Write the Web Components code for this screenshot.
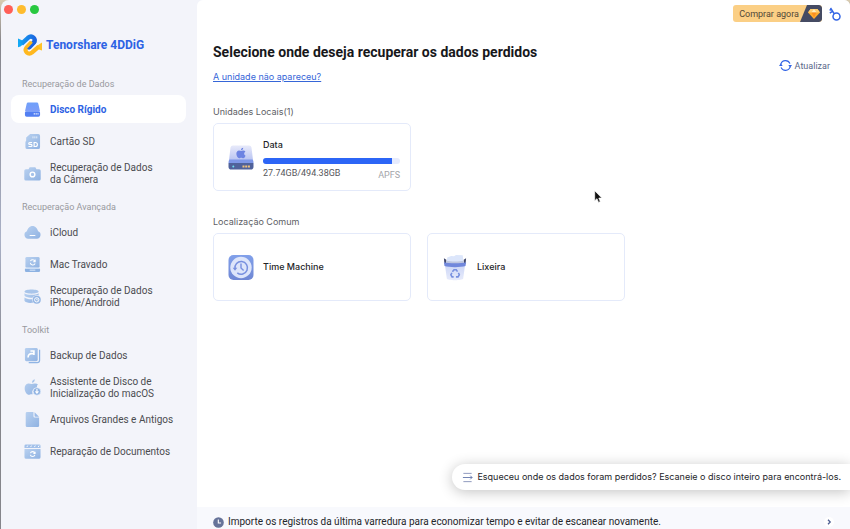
<!DOCTYPE html>
<html lang="pt-BR">
<head>
<meta charset="utf-8">
<title>Tenorshare 4DDiG</title>
<style>
    html {
        background: linear-gradient(#d8cbb0, #85858b 8%, #a9b0c6 45%, #85858b 70%);
    }
    body {
        margin: 0;
        font-family: Roboto, "Liberation Sans", sans-serif;
        font-size: 10px;
        line-height: 12px;
        color: #4b4c50;
    }
</style>
</head>
<body>
<dig-window>
    <dig-sidebar slot="sidebar">
        <dig-nav-group label="Recuperação de Dados">
            <dig-nav-item icon="disk" active>Disco Rígido</dig-nav-item>
            <dig-nav-item icon="sd">Cartão SD</dig-nav-item>
            <dig-nav-item icon="camera">Recuperação de Dados<br>da Câmera</dig-nav-item>
        </dig-nav-group>
        <dig-nav-group label="Recuperação Avançada">
            <dig-nav-item icon="cloud">iCloud</dig-nav-item>
            <dig-nav-item icon="mac">Mac Travado</dig-nav-item>
            <dig-nav-item icon="phone">Recuperação de Dados<br>iPhone/Android</dig-nav-item>
        </dig-nav-group>
        <dig-nav-group label="Toolkit">
            <dig-nav-item icon="backup">Backup de Dados</dig-nav-item>
            <dig-nav-item icon="boot">Assistente de Disco de<br>Inicialização do macOS</dig-nav-item>
            <dig-nav-item icon="file">Arquivos Grandes e Antigos</dig-nav-item>
            <dig-nav-item icon="repair">Reparação de Documentos</dig-nav-item>
        </dig-nav-group>
    </dig-sidebar>

    <dig-topbar></dig-topbar>
    <dig-heading>Selecione onde deseja recuperar os dados perdidos</dig-heading>
    <dig-section label="Unidades Locais(1)">
        <dig-drive icon="drive" used="27.74GB/494.38GB" format="APFS" value="94">Data</dig-drive>
    </dig-section>
    <dig-section label="Localização Comum">
        <dig-drive icon="timemachine">Time Machine</dig-drive>
        <dig-drive icon="trash">Lixeira</dig-drive>
    </dig-section>
    <dig-tip>Esqueceu onde os dados foram perdidos? Escaneie o disco inteiro para encontrá-los.</dig-tip>
    <dig-import slot="footer">Importe os registros da última varredura para economizar tempo e evitar de escanear novamente.</dig-import>
</dig-window>
<dig-cursor></dig-cursor>

<script>
    const GRADIENT = `<defs><linearGradient id="g" x1="0" y1="0" x2="1" y2="1">
        <stop offset="0" stop-color="#b9d1f0"/><stop offset="1" stop-color="#8fb2e2"/>
    </linearGradient></defs>`;

    const APPLE = 'M10.8 4.2c.9-1 1-2 .9-2.7-1.2.1-2.6 1-2.7 3 .7.1 1.300 0 1.800-.3zM12 5c-1.200 0-1.800.6-2.700.6S7.600 5 6.500 5C4.500 5 3 6.700 3 9.200 3 11.900 4.900 15 6.600 15c.9 0 1.500-.6 2.700-.6s1.600.6 2.600.6c1.300 0 2.400-1.800 2.900-3.200-2.500-1.200-2.300-4.300-.1-5.500C14.100 5.500 13.100 5 12 5z';

    const ICONS = {
        disk: ['0 0 18 18', `<defs><linearGradient id="g" x2="0" y2="1"><stop stop-color="#6fa0fa"/><stop offset="1" stop-color="#7d9df8"/></linearGradient></defs>
            <path d="M4.500 1.500h9c.8 0 1.400.5 1.600 1.200l1.800 7.800H1.100l1.800-7.800c.2-.7.800-1.200 1.600-1.200z" fill="url(#g)"/>
            <rect x="1" y="10.600" width="16" height="6" rx="1.800" fill="#527ff2"/>
            <path d="M1.500 11h15" stroke="#a9c3ff" stroke-width=".6"/>
            <path d="M10.300 13.700h1.200m.8 0h1.200m.8 0h1.100" stroke="#fff" stroke-width="1.300"/>`],
        sd: ['0 0 18 18', `${GRADIENT}<path d="M6.500 1H15a2 2 0 0 1 2 2v12a2 2 0 0 1-2 2H3.500a2 2 0 0 1-2-2V9.500L2.300 8V4.800z" fill="url(#g)"/>
            <path d="M9.500 3.500v2.200m2-2.200v2.200m2-2.200v2.200" stroke="#fff" stroke-width=".9" opacity=".8"/>
            <path d="M8.600 10.100H6.100c-1.500 0-1.500 2 0 2h1.300c1.500 0 1.500 2.200 0 2.200H4.700M10.700 10v4.300h1.400c2.800 0 2.800-4.300 0-4.300z" fill="none" stroke="#fff" stroke-width="1.200"/>`],
        camera: ['0 0 18 18', `${GRADIENT}<path d="M6 2.500h6l1.200 2H16a1.700 1.700 0 0 1 1.700 1.700v8.600A1.700 1.700 0 0 1 16 16.500H2a1.700 1.700 0 0 1-1.700-1.700V6.200A1.700 1.700 0 0 1 2 4.500h2.800z" fill="url(#g)"/>
            <circle cx="9" cy="10" r="2.500" fill="none" stroke="#fff" stroke-width="1.500"/>`],
        cloud: ['0 0 18 18', `${GRADIENT}<path d="M4.300 15.500a4 4 0 0 1-1.300-7.700c.7-3.100 2.900-5.800 6-5.800s5.300 2.700 6 5.800a4 4 0 0 1-1.300 7.700z" fill="url(#g)"/>
            <path d="M6 12.200h6" stroke="#fff" stroke-width="1.100"/>`],
        mac: ['0 0 18 18', `${GRADIENT}<rect x="1.500" y="1" width="15" height="11.500" rx="1.500" fill="url(#g)"/>
            <rect x="1" y="13" width="16" height="4" rx="1.300" fill="#8db2e2"/>
            <path d="M1.500 12.900h15M6 15h6" stroke="#eaf2ff" stroke-width=".9"/>
            <path d="M6.800 5.200A2.700 2.700 0 0 1 11.700 6M11.800 8A2.700 2.700 0 0 1 6.700 7.300M11.800 3.800V6H9.700" fill="none" stroke="#fff" stroke-width="1.100"/>`],
        phone: ['0 0 18 18', `${GRADIENT}<path d="M.5 3.800C.5.800 15.500.800 15.500 3.800S.5 6.800.5 3.800z" fill="#a9c5ea"/>
            <path d="M.5 5.500c2.500 2.300 12.500 2.300 15 0V8C12.800 7 9.800 8.500 9 10.200 5 10.500 1.500 9.600.5 8zM.5 10c2 1.600 5 2 8.100 1.800 0 1.300.4 2.600 1.200 3.600C6.300 16.300 1.400 15.500.5 13.500z" fill="url(#g)"/>
            <circle cx="13.500" cy="12.500" r="4.300" fill="#96b7e4"/><circle cx="13.500" cy="12.500" r="2.300" fill="none" stroke="#fff"/>
            <path d="M13.500 11.200v1.500h1.200" stroke="#fff" fill="none" stroke-width=".8"/>`],
        backup: ['0 0 18 18', `${GRADIENT}<path d="M5 16.500h9a2.500 2.500 0 0 0 2.500-2.500V3" fill="none" stroke="#8fb4e4" stroke-width="1.300"/>
            <rect x="1" y="1" width="13.500" height="14" rx="1.500" fill="url(#g)"/>
            <path d="M4.300 11.200c0-3.100 1.700-4.500 5.400-4.500M6.800 4.200h3.700v4.300" fill="none" stroke="#fff" stroke-width="1.700"/>`],
        boot: ['0 0 18 18', `${GRADIENT}<path d="M8.400 4c0-2 1.100-3.400 3-3.700.2 2-1.100 3.500-3 3.700zM12 4.800c-1.500-.5-2.800.4-4 .4s-2-.6-3.500-.4C2 5.200.5 7.200.7 10.200c.2 3.200 2.300 6.500 4.500 6.500 1 0 1.500-.5 2.600-.5h1.400C7.800 12.500 10 9.200 13.800 9c-.3-1.500 0-2.700 1-3.300-.7-.6-1.700-.9-2.800-.9z" fill="url(#g)"/>
            <circle cx="13.700" cy="13.200" r="4" fill="#8fb2e2" stroke="#eef3fc" stroke-width=".7"/><path d="M13.700 10.700v4m-1.600-1.500 1.600 1.700 1.600-1.700" fill="none" stroke="#fff" stroke-width="1.200"/>`],
        file: ['0 0 18 18', `${GRADIENT}<path d="M3.300 1H10v4.500a1.500 1.500 0 0 0 1.500 1.500H16v8.500a1.500 1.500 0 0 1-1.500 1.500H3.300a1.500 1.500 0 0 1-1.500-1.500v-13A1.500 1.500 0 0 1 3.300 1z" fill="url(#g)"/>
            <path d="M11.200 1.200 15.900 6h-3.600a1 1 0 0 1-1.100-1z" fill="#9dbce8"/>`],
        repair: ['0 0 18 18', `${GRADIENT}<path d="M2 1.500h14A1.500 1.500 0 0 1 17.500 3v2.200H.5V3A1.500 1.500 0 0 1 2 1.500z" fill="#a3c1ea"/>
            <path d="M3 4.300 4 2.700m3 1.600 1-1.600m3 1.600 1-1.600m3 1.600 1-1.600" stroke="#fff"/>
            <path d="M.5 6.300h17V15a1.800 1.800 0 0 1-1.800 1.800H2.300A1.800 1.800 0 0 1 .5 15z" fill="url(#g)"/>
            <path d="M6.800 10.700A2.500 2.500 0 0 1 11.500 11M11.500 12.500a2.500 2.500 0 0 1-4.800 0M11.700 9.300V11H9.900" fill="none" stroke="#fff" stroke-width="1.200"/>`],
        logo: ['0 0 24 24', `<defs><linearGradient id="b" gradientUnits="userSpaceOnUse" x2="18"><stop stop-color="#12a8f5"/><stop offset="1" stop-color="#1b62de"/></linearGradient></defs>
            <path d="M0 5.500 4 7.300l2 3.200-3.500 3L0 14.200z" fill="#12a8f5"/>
            <path d="M24 9.500v8l-2.500-.8-3.700-3.200z" fill="#ffc229"/>
            <path d="M3.500 10.800 10 4.800c4-3.400 8.800 1.200 5.800 4.700L11 14.500" fill="none" stroke="url(#b)" stroke-width="4.400"/>
            <path d="M20.800 13.700 14.200 19.400c-4 3.200-8.800-1.400-5.600-5.100L13.500 9.200" fill="none" stroke="#ffb81f" stroke-width="4.200"/>
            <path d="M16.300 9 11 14.500" fill="none" stroke="#1b62de" stroke-width="4.200" stroke-linecap="round"/>
            <path d="m8.400 14.500 5.500-5.700" stroke="#ffb81f" stroke-width="2.600"/>`],
        drive: ['0 0 26 26', `<defs><linearGradient id="g" x2="0" y2="1"><stop stop-color="#e8eafa"/><stop offset="1" stop-color="#b9c4f2"/></linearGradient></defs>
            <path d="M5 1h16a2.500 2.500 0 0 1 2.500 2L25 15.500H1L2.500 3A2.500 2.500 0 0 1 5 1z" fill="url(#g)"/>
            <path d="M1.500 15h23c.8 1 1 2 1 3.500H.5c0-1.500.2-2.500 1-3.500z" fill="#7f98e8"/>
            <path d="M.5 18.500h25v3.700a2.800 2.800 0 0 1-2.800 2.800H3.300a2.800 2.800 0 0 1-2.800-2.800z" fill="#50629b"/>
            <path d="M14.500 22h8" stroke="#efc37d" stroke-width="2.200" stroke-dasharray="2 .7"/><circle cx="5.300" cy="22" r="1" fill="#6de0f0"/>
            <path transform="translate(6 2) scale(.78)" d="${APPLE}" fill="#6c83e2"/>`],
        timemachine: ['0 0 26 26', `<defs><linearGradient id="g" x2="0" y2="1"><stop stop-color="#81a0ea"/><stop offset="1" stop-color="#6f87d4"/></linearGradient></defs>
            <rect x=".5" y=".5" width="25" height="25" rx="5" fill="url(#g)"/>
            <circle cx="13" cy="13" r="10.700" fill="#dde5fa"/>
            <path d="M7 14.500a6.300 6.300 0 1 1 2.300 3.800" fill="none" stroke="#7890df" stroke-width="1.500"/>
            <path d="M4.700 13.200h4.600L7 16.300z" fill="#7890df"/>
            <path d="M13 9v4.500l2.600 2.600" fill="none" stroke="#7890df" stroke-width="1.400"/>`],
        trash: ['0 0 26 28', `<defs><linearGradient id="g" x2="0" y2="1"><stop stop-color="#ccd6f6"/><stop offset="1" stop-color="#e7ebfb"/></linearGradient></defs>
            <path d="M1.500 4.500 4 6v4H2zM24.500 4.500 22 6v4h2z" fill="#42496c"/>
            <path d="M5 3.500 9 2l3 .4L14 1l7 .2 1 8.800H4z" fill="#dce6fb"/>
            <path d="M4 7c4 1 14 1 18 0v4H4z" fill="#bec6df"/>
            <path d="M2.500 11h21l-2 14.500c-.3 2.300-16.700 2.300-17 0z" fill="url(#g)"/>
            <path d="M1.500 8.500c5 1.500 18 1.500 23 0l-.6 4c-5 1.600-17 1.600-21.800 0z" fill="#7188dc"/>
            <path d="m10.300 18.500 1.700-2.200h2.300l1.300 2M16.500 19.500l1 2-1.300 2.200H14M11.600 23.700H9.900l-1.200-2.200 1.100-2" fill="none" stroke="#7890df" stroke-width="1.600"/>`],
        refresh: ['0 0 14 14', `<path d="M2 5.500a5.200 5.200 0 0 1 9.800-.5M12 8.500a5.200 5.200 0 0 1-9.800.5" fill="none" stroke="#3264e5" stroke-width="1.200"/>
            <path d="M10 6.500h4L12 9.300zM0 7.500h4L2 4.700z" fill="#3264e5"/>`],
        key: ['0 0 14 14', `<circle cx="8.500" cy="9.500" r="3.500" fill="none" stroke="#3264e5" stroke-width="1.500"/>
            <path d="M6.300 6.800 2.500 1M1.800 6.200l2.900-2M1.600 3.300l2-1.400" stroke="#3264e5" stroke-width="1.500"/>`],
        gem: ['0 0 22 17', `<path d="M7 0h12a3 3 0 0 1 3 3v11a3 3 0 0 1-3 3H0z" fill="#454b63"/>
            <path d="M10.500 4h7l2.500 3.500-6 6.500-6-6.500z" fill="#ffad2c"/><path d="M10.500 4 8 7.500h12L17.500 4z" fill="#ffcf70"/>
            <path d="m14 4-2.500 3.500h5z" fill="#fff0bf"/><path d="m11.500 7.500 2.500 5 2.500-5z" fill="#fb9021"/>`],
        scan: ['0 0 12 12', `<path d="M1.500 1.500h9M1.500 10.500h9" stroke="#8792b9"/><path d="M1 6h10M9 4l2 2-2 2" fill="none" stroke="#6678ad"/>`],
        clock: ['0 0 12 12', `<circle cx="6" cy="6" r="5.800" fill="#667399"/><path d="M5.800 2.800v3.700h3" fill="none" stroke="#fff" stroke-width="1.200"/>`],
        chevron: ['0 0 10 10', `<circle cx="5" cy="5" r="5" fill="#fff"/><path d="m4 2.800 2.200 2.200L4 7.200" fill="none" stroke="#4d5e91" stroke-width="1.300"/>`]
    };

    class DigElement extends HTMLElement {
        constructor() {
            super();
            this.attachShadow({ mode: 'open' });
        }

        connectedCallback() {
            this.shadowRoot.innerHTML = this.render();
        }
    }

    class DigIcon extends DigElement {
        render() {
            const [viewBox, shapes] = ICONS[this.getAttribute('name')];
            return `
                <style>
                    :host { display: block; flex: none; }
                    svg { display: block; width: 100%; height: 100%; }
                </style>
                <svg viewBox="${viewBox}" aria-hidden="true">${shapes}</svg>`;
        }
    }

    class DigWindow extends DigElement {
        render() {
            return `
                <style>
                    :host {
                        display: grid;
                        grid-template-columns: 196px minmax(0, 1fr);
                        min-height: 100vh;
                        margin-left: 1px;
                        border-radius: 8px 6px 0 0;
                        overflow: hidden;
                        background: #f3f4fa;
                    }
                    .page {
                        position: relative;
                        display: flex;
                        flex-direction: column;
                        background: #fff;
                        border-top-left-radius: 6px;
                    }
                    main { flex: 1; padding: 0 16px; }
                </style>
                <slot name="sidebar"></slot>
                <div class="page">
                    <main><slot></slot></main>
                    <slot name="footer"></slot>
                </div>`;
        }
    }

    class DigSidebar extends DigElement {
        render() {
            return `
                <style>
                    :host { display: block; padding: 5px 11px 16px 10px; }
                    .lights { display: flex; gap: 4px; margin-left: -7px; }
                    .lights button {
                        width: 9px;
                        height: 9px;
                        padding: 0;
                        border: 0;
                        border-radius: 50%;
                    }
                    .close { background: #ff5f57; }
                    .minimize { background: #febc2e; }
                    .zoom { background: #28c840; }
                    .brand {
                        display: flex;
                        align-items: center;
                        gap: 4px;
                        margin: 19px 7px;
                        font-size: 12px;
                        line-height: 24px;
                        font-weight: 700;
                        color: #2d62e4;
                    }
                    .brand dig-icon { width: 24px; height: 24px; }
                    nav { display: flex; flex-direction: column; gap: 12px; }
                </style>
                <div class="lights">
                    <button class="close" aria-label="Fechar"></button>
                    <button class="minimize" aria-label="Minimizar"></button>
                    <button class="zoom" aria-label="Ampliar"></button>
                </div>
                <div class="brand"><dig-icon name="logo"></dig-icon>Tenorshare 4DDiG</div>
                <nav><slot></slot></nav>`;
        }
    }

    class DigNavGroup extends DigElement {
        render() {
            return `
                <style>
                    :host { display: flex; flex-direction: column; gap: 4px; }
                    .label {
                        padding: 1px 11px 0;
                        font-size: 9px;
                        line-height: 14px;
                        color: #98999e;
                    }
                </style>
                <div class="label">${this.getAttribute('label')}</div>
                <slot></slot>`;
        }
    }

    class DigNavItem extends DigElement {
        render() {
            return `
                <style>
                    :host { display: block; }
                    a {
                        display: flex;
                        align-items: center;
                        gap: 9px;
                        min-height: 28px;
                        padding: 0 13px;
                        border-radius: 8px;
                        color: inherit;
                        text-decoration: none;
                        white-space: nowrap;
                    }
                    :host([active]) a {
                        background: #fff;
                        color: #2d62e4;
                        font-weight: 700;
                    }
                    dig-icon { width: 17px; height: 17px; }
                    span { padding-top: 2px; }
                </style>
                <a href="#"><dig-icon name="${this.getAttribute('icon')}"></dig-icon><span><slot></slot></span></a>`;
        }
    }

    class DigTopbar extends DigElement {
        render() {
            return `
                <style>
                    :host {
                        display: flex;
                        justify-content: flex-end;
                        align-items: center;
                        gap: 6px;
                        height: 17px;
                        padding-top: 5px;
                        margin-right: -8px;
                    }
                    button {
                        display: flex;
                        align-items: center;
                        padding: 0;
                        border: 0;
                        background: none;
                        font: inherit;
                        color: #514737;
                    }
                    .buy {
                        gap: 1px;
                        padding-left: 6px;
                        border-radius: 3px;
                        background: #fbcf85;
                        font-size: 9px;
                        overflow: hidden;
                    }
                    .buy dig-icon { width: 22px; height: 17px; }
                    .key dig-icon { width: 14px; height: 14px; }
                </style>
                <button class="buy">Comprar agora<dig-icon name="gem"></dig-icon></button>
                <button class="key" aria-label="Registrar"><dig-icon name="key"></dig-icon></button>`;
        }
    }

    class DigHeading extends DigElement {
        render() {
            return `
                <style>
                    :host {
                        display: flex;
                        justify-content: space-between;
                        align-items: flex-end;
                        padding: 20px 4px 23px 0;
                    }
                    h1 {
                        margin: 0 0 9px;
                        font-size: 14px;
                        line-height: 20px;
                        color: #17181b;
                    }
                    a {
                        font-family: Inter, "Liberation Sans", sans-serif;
                        font-size: 9px;
                        line-height: 12px;
                        color: #3666d8;
                    }
                    .link { display: flex; }
                    button {
                        display: flex;
                        align-items: center;
                        gap: 3px;
                        padding: 0;
                        margin-bottom: 11px;
                        border: 0;
                        background: none;
                        font: inherit;
                        font-size: 9px;
                        color: #596789;
                    }
                    button dig-icon { width: 13px; height: 13px; }
                </style>
                <div>
                    <h1><slot></slot></h1>
                    <div class="link"><a href="#">A unidade não apareceu?</a></div>
                </div>
                <button><dig-icon name="refresh"></dig-icon>Atualizar</button>`;
        }
    }

    class DigSection extends DigElement {
        render() {
            return `
                <style>
                    :host { display: block; margin-bottom: 25px; }
                    h2 {
                        margin: 0 0 5px;
                        font-family: Inter, "Liberation Sans", sans-serif;
                        font-size: 9px;
                        line-height: 12px;
                        font-weight: 400;
                        color: #606166;
                    }
                    .cards {
                        display: grid;
                        grid-template-columns: repeat(auto-fill, 198px);
                        gap: 16px;
                    }
                </style>
                <h2>${this.getAttribute('label')}</h2>
                <div class="cards"><slot></slot></div>`;
        }
    }

    class DigDrive extends DigElement {
        render() {
            const used = this.getAttribute('used');
            const usage = used ? `
                <progress max="100" value="${this.getAttribute('value')}" aria-label="Espaço"></progress>
                <span class="usage"><span>${used}</span><span class="format">${this.getAttribute('format')}</span></span>` : '';
            return `
                <style>
                    :host { display: block; }
                    button {
                        display: flex;
                        align-items: center;
                        gap: 9px;
                        box-sizing: border-box;
                        width: 100%;
                        height: 68px;
                        padding: 0 10px 0 14px;
                        border: 1px solid #e4eafa;
                        border-radius: 5px;
                        background: #fff;
                        font: inherit;
                        font-size: 9px;
                        text-align: left;
                        color: #232427;
                    }
                    dig-icon { width: 26px; height: 27px; }
                    .info { flex: 1; display: flex; flex-direction: column; }
                    :host([used]) .info { padding-top: 5px; }
                    .name { font-family: Inter, "Liberation Sans", sans-serif; font-weight: 500; }
                    progress {
                        display: block;
                        appearance: none;
                        width: 100%;
                        height: 6px;
                        margin: 7px 0 3px;
                        border: 0;
                        border-radius: 3px;
                        overflow: hidden;
                    }
                    progress::-webkit-progress-bar { background: #e6ebfd; }
                    progress::-webkit-progress-value { background: #2c65f6; }
                    .usage { display: flex; justify-content: space-between; color: #55565b; }
                    .format { padding-top: 2px; color: #a3a4a9; }
                </style>
                <button>
                    <dig-icon name="${this.getAttribute('icon')}"></dig-icon>
                    <span class="info"><span class="name"><slot></slot></span>${usage}</span>
                </button>`;
        }
    }

    class DigTip extends DigElement {
        render() {
            return `
                <style>
                    :host { position: absolute; right: 0; bottom: 39px; }
                    button {
                        display: flex;
                        align-items: center;
                        gap: 4px;
                        height: 26px;
                        padding: 0 9px 0 10px;
                        border: 0;
                        border-radius: 13px 0 0 13px;
                        background: #fff;
                        box-shadow: 0 2px 14px rgba(0, 0, 0, 0.24);
                        font-family: Inter, "Liberation Sans", sans-serif;
                        font-size: 9px;
                        line-height: 12px;
                        color: #242529;
                        white-space: nowrap;
                    }
                    dig-icon { width: 11px; height: 11px; }
                </style>
                <button><dig-icon name="scan"></dig-icon><slot></slot></button>`;
        }
    }

    class DigImport extends DigElement {
        render() {
            return `
                <style>
                    :host { display: block; background: #f8f9fd; }
                    button {
                        display: flex;
                        align-items: center;
                        gap: 4px;
                        width: 100%;
                        padding: 9px 16px 1px;
                        border: 0;
                        background: none;
                        font: inherit;
                        text-align: left;
                        color: #242529;
                    }
                    .text { flex: 1; }
                    .clock { width: 11px; height: 11px; }
                    .go { width: 10px; height: 10px; }
                </style>
                <button>
                    <dig-icon class="clock" name="clock"></dig-icon>
                    <span class="text"><slot></slot></span>
                    <dig-icon class="go" name="chevron"></dig-icon>
                </button>`;
        }
    }

    class DigCursor extends DigElement {
        render() {
            return `
                <style>
                    :host { position: absolute; left: 594px; top: 190px; pointer-events: none; }
                    svg { display: block; }
                </style>
                <svg width="9" height="14" viewBox="0 0 9 14">
                    <path d="M.7.700v10l2.300-2 1.500 3.700 1.800-.8-1.500-3.500h3.100z" fill="#111" stroke="#fff" stroke-width=".7"/>
                </svg>`;
        }
    }

    customElements.define('dig-icon', DigIcon);
    customElements.define('dig-window', DigWindow);
    customElements.define('dig-sidebar', DigSidebar);
    customElements.define('dig-nav-group', DigNavGroup);
    customElements.define('dig-nav-item', DigNavItem);
    customElements.define('dig-topbar', DigTopbar);
    customElements.define('dig-heading', DigHeading);
    customElements.define('dig-section', DigSection);
    customElements.define('dig-drive', DigDrive);
    customElements.define('dig-tip', DigTip);
    customElements.define('dig-import', DigImport);
    customElements.define('dig-cursor', DigCursor);
</script>
</body>
</html>
